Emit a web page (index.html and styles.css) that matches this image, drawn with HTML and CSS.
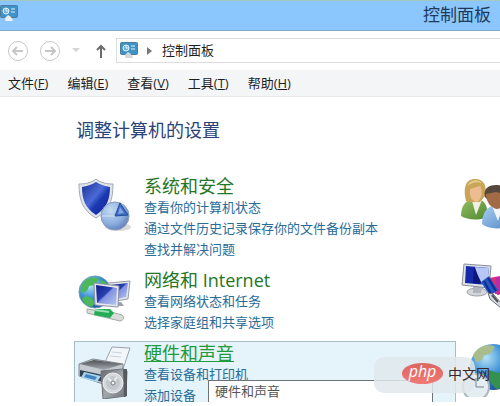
FILE: index.html
```
<!DOCTYPE html>
<html lang="zh-CN">
<head>
    <meta charset="UTF-8">
    <meta name="viewport" content="width=device-width, initial-scale=1.0">
    <title>控制面板</title>
    <link rel="stylesheet" href="styles.css">
</head>
<body>
    <div class="window">
        <header class="titlebar">
            <svg class="panel-icon" viewBox="0 0 18 17">
                <path d="M6 12h6l1 4H5z" fill="#d9dfe3"/>
                <rect x="0.5" y="0.5" width="17" height="12" rx="1" fill="#3f93c6" stroke="#4a7c9c"/>
                <circle cx="6" cy="6" r="3" fill="#6fb5dc" stroke="#e3f3fb"/>
                <path d="M6 6V3M6 6h3M11 4h4M11 7h4" stroke="#e3f3fb" fill="none"/>
                <path d="M5 13l3-3 3 2 1 4H6z" fill="#eef1f3"/>
            </svg>
            <h1>控制面板</h1>
        </header>

        <nav class="navbar">
            <button class="round" aria-label="后退">
                <svg viewBox="0 0 22 22"><circle cx="11" cy="11" r="9.5"/><path d="M16 11H6M10 7l-4 4 4 4"/></svg>
            </button>
            <button class="round" aria-label="前进">
                <svg viewBox="0 0 22 22"><circle cx="11" cy="11" r="9.5"/><path d="M6 11h10M12 7l4 4-4 4"/></svg>
            </button>
            <button class="recent" aria-label="最近的位置">
                <svg viewBox="0 0 8 5"><path d="M0 0h8L4 4z" fill="#d5d5d5"/></svg>
            </button>
            <button class="up" aria-label="向上">
                <svg viewBox="0 0 10 14"><path d="M5 14V2M1 6l4-4 4 4" fill="none" stroke="#6b6b6b" stroke-width="2"/></svg>
            </button>
            <div class="address">
                <svg class="panel-icon" viewBox="0 0 18 17">
                    <path d="M6 12h6l1 4H5z" fill="#d9dfe3"/>
                    <rect x="0.5" y="0.5" width="17" height="12" rx="1" fill="#3f93c6" stroke="#4a7c9c"/>
                    <circle cx="6" cy="6" r="3" fill="#6fb5dc" stroke="#e3f3fb"/>
                    <path d="M6 6V3M6 6h3M11 4h4M11 7h4" stroke="#e3f3fb" fill="none"/>
                    <path d="M5 13l3-3 3 2 1 4H6z" fill="#d3d8dc"/>
                </svg>
                <svg class="chevron" viewBox="0 0 5 8"><path d="M0 0l5 4-5 4z" fill="#777"/></svg>
                <button class="crumb">控制面板</button>
            </div>
        </nav>

        <div class="menubar">
            <button>文件(<u>F</u>)</button>
            <button>编辑(<u>E</u>)</button>
            <button>查看(<u>V</u>)</button>
            <button>工具(<u>T</u>)</button>
            <button>帮助(<u>H</u>)</button>
        </div>

        <main class="content">
            <h2>调整计算机的设置</h2>
            <div class="columns">
                <div class="column">
                    <section class="category">
                        <svg class="icon" viewBox="0 0 54 54">
                            <defs>
                                <linearGradient id="shield" x1="0" y1="0" x2="1" y2="1">
                                    <stop offset="0" stop-color="#1c2f96"/>
                                    <stop offset="0.45" stop-color="#4a6ad6"/>
                                    <stop offset="0.6" stop-color="#1c38b0"/>
                                    <stop offset="1" stop-color="#10279a"/>
                                </linearGradient>
                                <radialGradient id="pie" cx="0.35" cy="0.3" r="0.8">
                                    <stop offset="0" stop-color="#c3daf1"/>
                                    <stop offset="0.6" stop-color="#8daede"/>
                                    <stop offset="1" stop-color="#5876b4"/>
                                </radialGradient>
                            </defs>
                            <path d="M18 1c5 4 11 5 17 5 0 15-3 26-17 34C4 32 1 21 1 6c6 0 12-1 17-5z" fill="#dfe3ea" stroke="#a2a9b5"/>
                            <path d="M18 4c5 3 9 4 14 5 0 12-3 21-14 28C7 30 4 21 4 9c5-1 9-2 14-5z" fill="url(#shield)"/>
                            <ellipse cx="40" cy="49" rx="13" ry="4" fill="#c9c9c9" opacity="0.7"/>
                            <circle cx="37" cy="38" r="14" fill="url(#pie)" stroke="#8499bc"/>
                            <path d="M24 38h13l7-12" fill="none" stroke="#d5e4f5"/>
                            <path d="M42 25l8 12-13 1z" fill="#3f6cc4" stroke="#244a99"/>
                            <path d="M42 29l4 6-6 1z" fill="#7fa6e4"/>
                        </svg>
                        <div class="links">
                            <h3><a href="#">系统和安全</a></h3>
                            <a href="#">查看你的计算机状态</a>
                            <a href="#">通过文件历史记录保存你的文件备份副本</a>
                            <a href="#">查找并解决问题</a>
                        </div>
                    </section>

                    <section class="category">
                        <svg class="icon" viewBox="0 0 54 54">
                            <defs>
                                <radialGradient id="globe" cx="0.35" cy="0.3" r="0.75">
                                    <stop offset="0" stop-color="#b4e2f8"/>
                                    <stop offset="0.5" stop-color="#3f93d4"/>
                                    <stop offset="1" stop-color="#194d9d"/>
                                </radialGradient>
                                <linearGradient id="screen" x1="0" y1="0" x2="1" y2="1">
                                    <stop offset="0" stop-color="#101d86"/>
                                    <stop offset="0.45" stop-color="#2741b4"/>
                                    <stop offset="0.5" stop-color="#8092df"/>
                                    <stop offset="1" stop-color="#b9c6f1"/>
                                </linearGradient>
                            </defs>
                            <circle cx="17" cy="20" r="16" fill="url(#globe)" stroke="#6a9cb6"/>
                            <path d="M5 11c5-7 12-6 16-4l-4 6-6 1-2 5-6 2c-1-4 0-7 2-10zM8 24l6 2 3 5-3 4C8 34 5 30 4 26zM22 8l6 2 2 4-7 1z" fill="#4cb85b"/>
                            <path d="M30 11l22-2-2 18-18 3z" fill="#e2e4eb" stroke="#989daa"/>
                            <path d="M32 13l18-2-2 14-15 3z" fill="url(#screen)"/>
                            <path d="M35 31l8-1 3 4H33z" fill="#9c9fa9"/>
                            <path d="M16 11l25 3-1 21-23-2z" fill="#e8eaf0" stroke="#8d93a3"/>
                            <path d="M18 13l21 3-1 17-19-2z" fill="url(#screen)"/>
                            <path d="M9 37l28 4 7 2c3 2 1 6-2 6l-21-5-12-3z" fill="#d9ddda" stroke="#a2aaa5"/>
                            <path d="M17 37h15l4 4-4 5-16-3z" fill="#24ad55"/>
                            <path d="M17 38l14 2" stroke="#99e0b0" stroke-width="2"/>
                        </svg>
                        <div class="links">
                            <h3><a href="#">网络和 Internet</a></h3>
                            <a href="#">查看网络状态和任务</a>
                            <a href="#">选择家庭组和共享选项</a>
                        </div>
                    </section>

                    <section class="category active">
                        <svg class="icon" viewBox="0 0 54 54">
                            <defs>
                                <linearGradient id="printer" x1="0" y1="0" x2="0" y2="1">
                                    <stop offset="0" stop-color="#4e5155"/>
                                    <stop offset="1" stop-color="#a6acb3"/>
                                </linearGradient>
                                <linearGradient id="speaker" x1="0" y1="0" x2="1" y2="1">
                                    <stop offset="0" stop-color="#63686e"/>
                                    <stop offset="0.5" stop-color="#a3a8ad"/>
                                    <stop offset="1" stop-color="#696e74"/>
                                </linearGradient>
                            </defs>
                            <path d="M27 17l7-15 18 1-7 21z" fill="#f2f5fa" stroke="#9aa4ae"/>
                            <path d="M34 7l10 1M32 11l11 1" stroke="#c9d4e2"/>
                            <path d="M1 19l14-5 30 5v12l-20 8L1 31z" fill="#c5cad0" stroke="#84898f"/>
                            <path d="M2 19l14-4 29 4-19 6z" fill="url(#printer)"/>
                            <path d="M2 25l23 5v7L2 31z" fill="#34424f"/>
                            <path d="M6 27l17 4-4 6-16-4z" fill="#a9d5ee"/>
                            <path d="M8 29l11 3-2 3-11-3z" fill="#4482bc"/>
                            <path d="M23 26l22-2 4 2-1 25-23 3z" fill="url(#speaker)" stroke="#70757a"/>
                            <path d="M45 24h4v27l-3 1z" fill="#565b60"/>
                            <circle cx="35" cy="38" r="10" fill="#d5d9dc" stroke="#eef0f2"/>
                            <circle cx="35" cy="38" r="7" fill="#c2c7cb"/>
                            <path d="M30 33l5 5 4-6" fill="none" stroke="#e9ecee" stroke-width="2"/>
                            <circle cx="35" cy="38" r="2" fill="#f0f2f3" stroke="#777d83"/>
                        </svg>
                        <div class="links">
                            <h3><a href="#">硬件和声音</a></h3>
                            <a href="#">查看设备和打印机</a>
                            <a href="#">添加设备</a>
                        </div>
                        <div class="tooltip">硬件和声音</div>
                    </section>
                </div>

                <div class="column side">
                    <svg class="icon users" viewBox="0 0 54 54">
                        <defs>
                            <linearGradient id="green" x1="0" y1="0" x2="1" y2="1">
                                <stop offset="0" stop-color="#94bd62"/>
                                <stop offset="1" stop-color="#4f8732"/>
                            </linearGradient>
                            <linearGradient id="blue" x1="0" y1="0" x2="1" y2="1">
                                <stop offset="0" stop-color="#a8cff4"/>
                                <stop offset="1" stop-color="#5588c4"/>
                            </linearGradient>
                        </defs>
                        <path d="M0 39c0-9 4-15 9-16h11c5 2 7 9 6 17-8 4-20 3-26-1z" fill="url(#green)"/>
                        <path d="M11 24l4 14 6-15z" fill="#f1eee3"/>
                        <path d="M5 24C2 12 4 2 14 2s12 8 10 17l-5 6H9z" fill="#c9a557"/>
                        <path d="M6 9c3-6 10-8 15-3-6-2-10 0-15 3z" fill="#e5ce8d"/>
                        <path d="M9 12l10-3c3 5 2 13-3 16-5-1-8-5-7-13z" fill="#edbd91"/>
                        <path d="M21 47c0-10 4-16 10-18h12c6 3 9 10 9 17-8 7-24 7-31 1z" fill="url(#blue)"/>
                        <path d="M31 29l6 15 5-15z" fill="#f2f5f8"/>
                        <path d="M24 20c-2-8 3-12 11-12s14 5 12 14l-6 8h-8z" fill="#57483e"/>
                        <path d="M25 17l10-2 9 2c1 8-2 14-8 15-6-1-11-7-11-15z" fill="#a36b45"/>
                    </svg>
                    <svg class="icon display" viewBox="0 0 54 54">
                        <ellipse cx="16" cy="31" rx="10" ry="4" fill="#d4d6db" stroke="#9ca0a8"/>
                        <path d="M12 23l10 1-2 8h-8z" fill="#b2b5bd"/>
                        <path d="M3 3l27 2-2 22-27-3z" fill="#dfe2e9" stroke="#8a8e98"/>
                        <path d="M5 5l23 2-2 17-22-2z" fill="#152aa8"/>
                        <path d="M14 6l14 1-2 17-7-1z" fill="#b6c7f5"/>
                        <path d="M13 6l8 17-9-1z" fill="#0c167c"/>
                        <path d="M27 17l27-4v19l-20 1z" fill="#e22f71"/>
                        <path d="M34 16l8-1v18l-6 1z" fill="#ba2da2"/>
                        <path d="M20 21l8-6 9 14-8 6z" fill="#2455c8"/>
                        <path d="M23 20l7 13M27 17l8 13" stroke="#102c8c" stroke-width="2"/>
                        <path d="M27 32l5 1 10 11-2 3-11-9z" fill="#d7dade" stroke="#6c7078"/>
                        <path d="M31 34l6 7" stroke="#4e5156" stroke-width="2"/>
                    </svg>
                    <svg class="icon clock" viewBox="0 0 54 54">
                        <circle cx="32" cy="24" r="23" fill="url(#globe)"/>
                        <path d="M12 12c5-9 15-12 22-8l-5 7-6 1-2 5-6 2z" fill="#a9bd8c"/>
                        <path d="M27 27l12 3 6 9-9 8-7-8z" fill="#35914f"/>
                        <circle cx="15" cy="44" r="13" fill="#e4edf2" stroke="#abb6be" stroke-width="2"/>
                        <path d="M15 35v9h8" fill="none" stroke="#77828a"/>
                    </svg>
                </div>
            </div>
        </main>

        <div class="watermark">
            <span class="php">php</span>
            <span>中文网</span>
        </div>
    </div>
</body>
</html>
```

FILE: styles.css
```
* {
    box-sizing: border-box;
}

body {
    margin: 0;
    background-color: #fff;
    font-family: "Open Sans", "Noto Sans CJK SC", sans-serif;
    font-size: 13px;
    line-height: 21px;
    color: #1e1e1e;
}

h1, h2, h3 {
    margin: 0;
    font-weight: normal;
}

a {
    color: #296c98;
    text-decoration: none;
}

button {
    padding: 0;
    border: none;
    background: none;
    font: inherit;
    color: inherit;
}

svg {
    display: block;
    flex: none;
}

.window {
    position: relative;
    height: calc(100vh - 4px);
    overflow: hidden;
}

.titlebar {
    display: flex;
    justify-content: space-between;
    height: 31px;
    padding: 4px 9px 0 0;
    background-color: #8bc7fc;
    border-top: 1px solid #a5c8c4;
    border-bottom: 1px solid #83a9c9;
}

.titlebar h1 {
    font-size: 17px;
    line-height: 19px;
    color: #1d3a5a;
}

.panel-icon {
    width: 18px;
    height: 17px;
}

.navbar {
    display: flex;
    align-items: center;
    height: 39px;
    padding-left: 7px;
}

.round svg {
    width: 22px;
    height: 22px;
    fill: none;
    stroke: #c6c6c6;
    stroke-width: 2;
}

.round circle {
    stroke-width: 1;
}

.round + .round {
    margin-left: 10px;
}

.recent {
    margin-left: 11px;
}

.recent svg {
    width: 8px;
    height: 5px;
}

.up {
    margin-left: 16px;
}

.up svg {
    width: 10px;
    height: 14px;
}

.address {
    display: flex;
    flex: 1;
    align-items: center;
    height: 25px;
    margin-left: 10px;
    padding-left: 3px;
    border: 1px solid #dcdcdc;
    border-right: none;
}

.chevron {
    width: 5px;
    height: 8px;
    margin: 0 10px 0 9px;
}

.menubar {
    display: flex;
    gap: 19px;
    height: 27px;
    padding-left: 8px;
    background-color: #f4f5f7;
    border-bottom: 1px solid #e8e9eb;
}

.content {
    padding: 23px 0 0 74px;
}

.content h2 {
    padding-left: 2px;
    font-size: 18px;
    color: #2a4278;
}

.columns {
    display: grid;
    grid-template-columns: minmax(382px, 1fr) 44px;
    margin-top: 33px;
}

.category {
    position: relative;
    display: flex;
    gap: 12px;
    padding: 1px 3px 7px;
    border: 1px solid transparent;
}

.category.active {
    background-color: #e5f3fb;
    border-color: #a4bec8;
}

.icon {
    width: 54px;
    height: 54px;
}

.category .icon {
    margin-top: 2px;
}

.links {
    display: flex;
    flex-direction: column;
    align-items: flex-start;
}

.links h3 {
    font-size: 18px;
}

.links h3 a {
    color: #257625;
}

.active h3 a {
    color: #239a3b;
    text-decoration: underline;
}

.tooltip {
    position: absolute;
    top: 38px;
    left: 133px;
    width: 225px;
    height: 30px;
    padding-left: 6px;
    background-color: #fff;
    border: 1px solid #6d7478;
    color: #555;
}

.side {
    padding: 3px 0 0 5px;
}

.display {
    margin-top: 30px;
}

.clock {
    margin-top: 28px;
}

.watermark {
    position: absolute;
    z-index: 1;
    right: 10px;
    bottom: 18px;
    display: flex;
    align-items: center;
    gap: 5px;
    font-size: 14px;
    color: #3b2529;
}

/* pale patch behind the logo */
.watermark::before {
    content: "";
    position: absolute;
    z-index: -1;
    inset: -6px 15px -9px -28px;
    border-radius: 10px;
    background-color: rgba(224, 232, 235, 0.85);
}

.php {
    width: 41px;
    height: 21px;
    border-radius: 50%;
    background: linear-gradient(#dc6461, #f07a76);
    font-size: 16px;
    font-style: italic;
    line-height: 17px;
    text-align: center;
    color: #fff;
}
```
